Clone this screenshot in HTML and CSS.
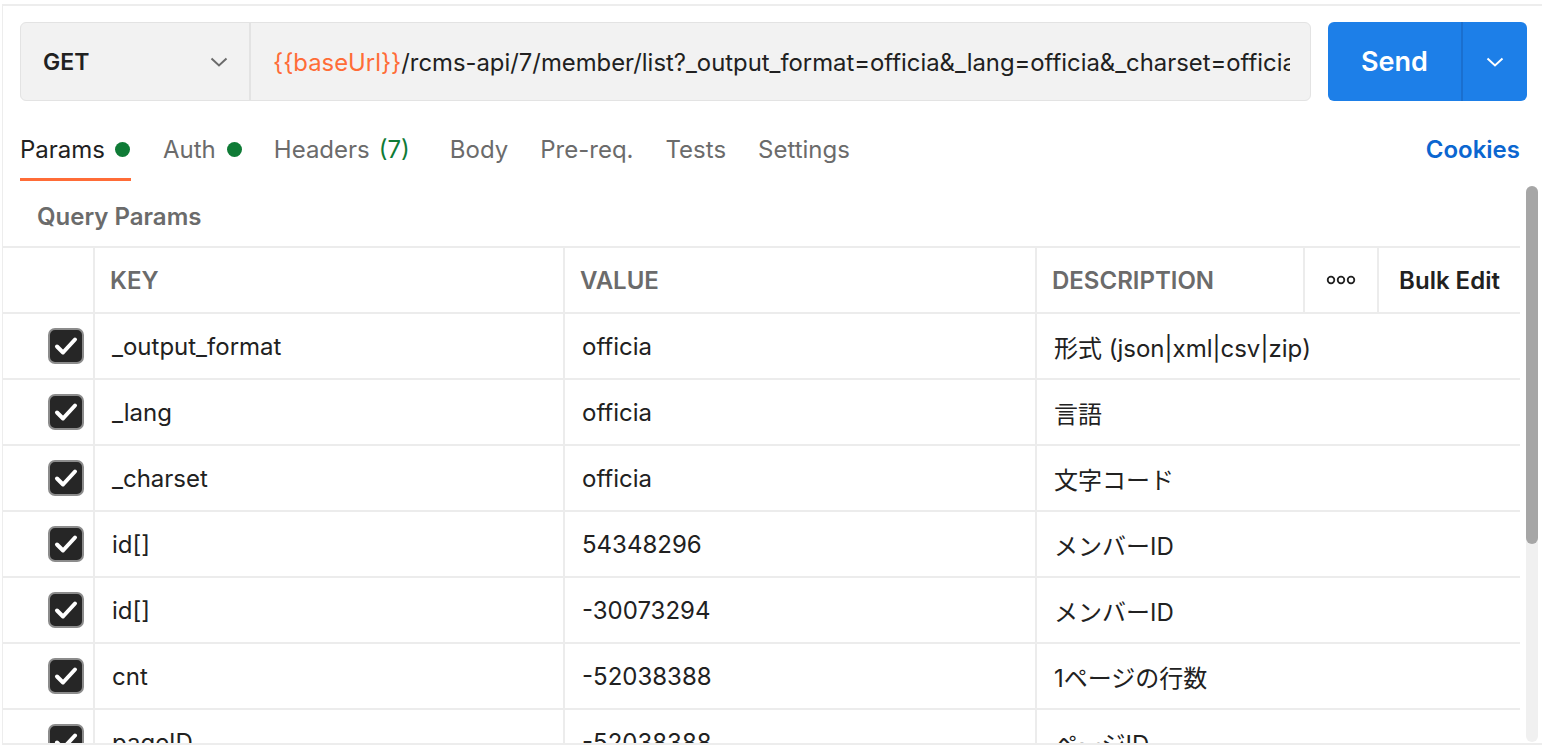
FILE: index.html
```html
<!DOCTYPE html>
<html lang="ja">
<head>
<meta charset="utf-8">
<title>Request</title>
<link rel="stylesheet" href="styles.css">
</head>
<body>
<div class="pane">
  <div class="request-row">
    <div class="url-bar">
      <div class="method">
        <span class="method-name">GET</span>
        <svg class="chev" width="18" height="10" viewBox="0 0 18 10"><path d="M1.5 1.5 L9 8.5 L16.5 1.5" fill="none" stroke="#6b6b6b" stroke-width="2"/></svg>
      </div>
      <div class="url"><span class="var">{{baseUrl}}</span>/rcms-api/7/member/list?_output_format=officia&amp;_lang=officia&amp;_charset=officia&amp;id[]=54348296&amp;id[]=-30073294&amp;cnt=-52038388</div>
    </div>
    <div class="send">
      <span class="send-label">Send</span>
      <span class="send-drop">
        <svg width="18" height="10" viewBox="0 0 18 10"><path d="M1.5 1.5 L9 8.5 L16.5 1.5" fill="none" stroke="#ffffff" stroke-width="2"/></svg>
      </span>
    </div>
  </div>

  <div class="tabs">
    <div class="tab active">Params<span class="dot"></span></div>
    <div class="tab">Auth<span class="dot"></span></div>
    <div class="tab headers">Headers<span class="count">(7)</span></div>
    <div class="tab">Body</div>
    <div class="tab">Pre-req.</div>
    <div class="tab">Tests</div>
    <div class="tab">Settings</div>
    <div class="spacer"></div>
    <div class="cookies">Cookies</div>
  </div>

  <div class="scroll-area">
    <div class="content">
      <div class="section-title">Query Params</div>
      <div class="grid">
        <div class="row head">
          <div class="cell check"></div>
          <div class="cell">KEY</div>
          <div class="cell">VALUE</div>
          <div class="cell">DESCRIPTION</div>
          <div class="cell icon">
            <svg width="30" height="10" viewBox="0 0 30 10"><circle cx="5" cy="5" r="3.3" fill="none" stroke="#212121" stroke-width="1.8"/><circle cx="15" cy="5" r="3.3" fill="none" stroke="#212121" stroke-width="1.8"/><circle cx="25" cy="5" r="3.3" fill="none" stroke="#212121" stroke-width="1.8"/></svg>
          </div>
          <div class="cell bulk">Bulk Edit</div>
        </div>

        <div class="row">
          <div class="cell check"><svg class="cb" width="36" height="36" viewBox="0 0 36 36"><rect x="1" y="1" width="34" height="34" rx="6" fill="#262626" stroke="#8c8c8c" stroke-width="2"/><path d="M9 18.5 L15 24.5 L27 11.5" fill="none" stroke="#fff" stroke-width="4" stroke-linecap="round" stroke-linejoin="round"/></svg></div>
          <div class="cell">_output_format</div>
          <div class="cell">officia</div>
          <div class="cell desc">形式 (json|xml|csv|zip)</div>
        </div>
        <div class="row">
          <div class="cell check"><svg class="cb" width="36" height="36" viewBox="0 0 36 36"><rect x="1" y="1" width="34" height="34" rx="6" fill="#262626" stroke="#8c8c8c" stroke-width="2"/><path d="M9 18.5 L15 24.5 L27 11.5" fill="none" stroke="#fff" stroke-width="4" stroke-linecap="round" stroke-linejoin="round"/></svg></div>
          <div class="cell">_lang</div>
          <div class="cell">officia</div>
          <div class="cell desc">言語</div>
        </div>
        <div class="row">
          <div class="cell check"><svg class="cb" width="36" height="36" viewBox="0 0 36 36"><rect x="1" y="1" width="34" height="34" rx="6" fill="#262626" stroke="#8c8c8c" stroke-width="2"/><path d="M9 18.5 L15 24.5 L27 11.5" fill="none" stroke="#fff" stroke-width="4" stroke-linecap="round" stroke-linejoin="round"/></svg></div>
          <div class="cell">_charset</div>
          <div class="cell">officia</div>
          <div class="cell desc">文字コード</div>
        </div>
        <div class="row">
          <div class="cell check"><svg class="cb" width="36" height="36" viewBox="0 0 36 36"><rect x="1" y="1" width="34" height="34" rx="6" fill="#262626" stroke="#8c8c8c" stroke-width="2"/><path d="M9 18.5 L15 24.5 L27 11.5" fill="none" stroke="#fff" stroke-width="4" stroke-linecap="round" stroke-linejoin="round"/></svg></div>
          <div class="cell">id[]</div>
          <div class="cell">54348296</div>
          <div class="cell desc">メンバーID</div>
        </div>
        <div class="row">
          <div class="cell check"><svg class="cb" width="36" height="36" viewBox="0 0 36 36"><rect x="1" y="1" width="34" height="34" rx="6" fill="#262626" stroke="#8c8c8c" stroke-width="2"/><path d="M9 18.5 L15 24.5 L27 11.5" fill="none" stroke="#fff" stroke-width="4" stroke-linecap="round" stroke-linejoin="round"/></svg></div>
          <div class="cell">id[]</div>
          <div class="cell">-30073294</div>
          <div class="cell desc">メンバーID</div>
        </div>
        <div class="row">
          <div class="cell check"><svg class="cb" width="36" height="36" viewBox="0 0 36 36"><rect x="1" y="1" width="34" height="34" rx="6" fill="#262626" stroke="#8c8c8c" stroke-width="2"/><path d="M9 18.5 L15 24.5 L27 11.5" fill="none" stroke="#fff" stroke-width="4" stroke-linecap="round" stroke-linejoin="round"/></svg></div>
          <div class="cell">cnt</div>
          <div class="cell">-52038388</div>
          <div class="cell desc">1ページの行数</div>
        </div>
        <div class="row">
          <div class="cell check"><svg class="cb" width="36" height="36" viewBox="0 0 36 36"><rect x="1" y="1" width="34" height="34" rx="6" fill="#262626" stroke="#8c8c8c" stroke-width="2"/><path d="M9 18.5 L15 24.5 L27 11.5" fill="none" stroke="#fff" stroke-width="4" stroke-linecap="round" stroke-linejoin="round"/></svg></div>
          <div class="cell">pageID</div>
          <div class="cell">-52038388</div>
          <div class="cell desc">ページID</div>
        </div>
      </div>
    </div>
    <div class="scrollbar"><div class="thumb"></div></div>
  </div>
</div>
</body>
</html>
```

FILE: styles.css
```css
* { box-sizing: border-box; }

html, body {
  margin: 0;
  padding: 0;
  background: #ffffff;
  height: 746px;
  overflow: hidden;
}

body {
  font-family: Inter, "Noto Sans CJK JP", sans-serif;
  color: #212121;
  padding-top: 4px;
}

.pane {
  height: 741px;
  margin-left: 2px;
  border-top: 2px solid #ededed;
  border-left: 1px solid #ededed;
  border-bottom: 2px solid #ededed;
  display: flex;
  flex-direction: column;
  overflow: hidden;
}

/* request row */
.request-row {
  display: flex;
  gap: 17px;
  padding: 16px 15px 0 17px;
}

.url-bar {
  flex: 1;
  min-width: 0;
  height: 79px;
  display: flex;
  background: #f2f2f2;
  border: 1px solid #e3e3e3;
  border-radius: 6px;
}

.method {
  width: 230px;
  flex: none;
  display: flex;
  align-items: center;
  justify-content: space-between;
  padding: 1px 21px 0 22px;
  border-right: 2px solid #e3e3e3;
}

.method-name {
  font-size: 23px;
  font-weight: 600;
  color: #212121;
}

.url {
  flex: 1;
  min-width: 0;
  display: flex;
  align-items: center;
  margin: 0 20px 0 22px;
  padding-top: 1px;
  font-size: 23.85px;
  color: #212121;
  white-space: nowrap;
  overflow: hidden;
}

.url .var { color: #ff6c37; }

.send {
  width: 199px;
  height: 79px;
  flex: none;
  display: flex;
  background: #1d7fe8;
  border-radius: 6px;
  color: #fff;
}

.send-label {
  width: 135px;
  display: flex;
  align-items: center;
  justify-content: center;
  font-size: 27px;
  font-weight: 600;
  border-right: 2px solid #1a6fcf;
}

.send-drop {
  flex: 1;
  display: flex;
  align-items: center;
  justify-content: center;
}

/* tabs */
.tabs {
  display: flex;
  align-items: stretch;
  gap: 32px;
  margin-top: 18px;
  padding: 0 22px 0 17px;
}

.tab {
  height: 62px;
  display: flex;
  align-items: center;
  font-size: 24px;
  color: #6b6b6b;
  padding-top: 1px;
  border-bottom: 3px solid transparent;
  white-space: nowrap;
}

.tab.active {
  color: #212121;
  border-bottom-color: #ff6c37;
}

.tab.headers { margin-right: 8px; }

.dot {
  width: 15px;
  height: 15px;
  border-radius: 50%;
  background: #0f7b36;
  margin-left: 11px;
  margin-top: 1px;
}

.tab.active .dot { margin-left: 10px; margin-right: 1px; }

.count {
  color: #0f7b36;
  margin-left: 9px;
}

.spacer { flex: 1; }

.cookies {
  display: flex;
  align-items: center;
  padding-top: 1px;
  padding-bottom: 3px;
  font-size: 24px;
  font-weight: 600;
  color: #0b66d0;
}

/* scroll area */
.scroll-area {
  flex: 1;
  min-height: 0;
  display: flex;
}

.content {
  flex: 1;
  min-width: 0;
}

.section-title {
  height: 65px;
  padding: 21px 0 0 34px;
  line-height: 30px;
  font-size: 24px;
  font-weight: 600;
  color: #6b6b6b;
}

.row {
  display: grid;
  grid-template-columns: 90px 470px 472px 268px 74px 143px;
  height: 66px;
  padding-bottom: 2px;
  border-top: 2px solid #ececec;
}

.cell {
  display: flex;
  align-items: center;
  padding-left: 17px;
  font-size: 24px;
  color: #212121;
  border-left: 2px solid #ececec;
  white-space: nowrap;
  overflow: hidden;
}

.row .cell { margin-bottom: -2px; }

.cell.check {
  border-left: none;
  padding-left: 0;
  justify-content: flex-end;
  padding-right: 9px;
}

.row.head .cell {
  font-size: 24px;
  font-weight: 600;
  color: #6b6b6b;
  padding-left: 15px;
}

.row.head .cell.icon {
  justify-content: center;
  padding-left: 0;
}

.row.head .cell.bulk {
  color: #212121;
  justify-content: center;
  padding-left: 0;
}

.cell.desc {
  grid-column: span 3;
}

/* scrollbar */
.scrollbar {
  width: 12px;
  flex: none;
  margin: 5px 4px 1px 6px;
  background: #f0f0f0;
  border-radius: 6px;
}

.thumb {
  height: 358px;
  background: #a6a6a6;
  border-radius: 6px;
}
```
